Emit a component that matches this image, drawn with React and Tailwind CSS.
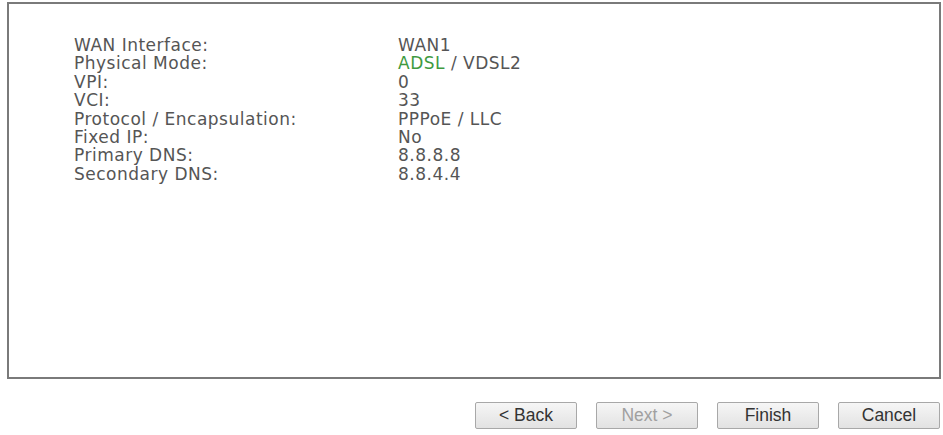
import React from "react";

const rows = [
  ["WAN Interface:", "WAN1"],
  ["Physical Mode:", "mode"],
  ["VPI:", "0"],
  ["VCI:", "33"],
  ["Protocol / Encapsulation:", "PPPoE / LLC"],
  ["Fixed IP:", "No"],
  ["Primary DNS:", "8.8.8.8"],
  ["Secondary DNS:", "8.8.4.4"],
];

function WizardButton({ children, disabled }) {
  return (
    <button
      type="button"
      className={
        "w-[102px] h-[27px] border border-[#a8a8a8] rounded-[2px] bg-gradient-to-b from-[#f6f6f6] to-[#e2e2e2] text-[17.5px] leading-none " +
        (disabled ? "text-[#a0a0a0]" : "text-[#333]")
      }
      style={{ fontFamily: '"Liberation Sans", Arial, sans-serif' }}
    >
      {children}
    </button>
  );
}

export default function App() {
  return (
    <div className="w-[943px] h-[435px] bg-white pl-[7px] pt-[2px]">
      <div
        className="w-[934px] h-[377px] border-2 border-[#7a7a7a] pl-[65px] pt-[32px] text-[17px] leading-[18.4px] tracking-[0.5px] text-[#555]"
        style={{ fontFamily: '"DejaVu Sans", Verdana, sans-serif' }}
      >
        {rows.map(([label, value]) => (
          <div key={label} className="flex">
            <div className="w-[324px]">{label}</div>
            <div>
              {value === "mode" ? (
                <>
                  <span className="text-[#3f9a3f]">ADSL</span> / VDSL2
                </>
              ) : (
                value
              )}
            </div>
          </div>
        ))}
      </div>
      <div className="flex justify-end gap-[19px] pr-[3px] pt-[23px]">
        <WizardButton>&lt; Back</WizardButton>
        <WizardButton disabled>Next &gt;</WizardButton>
        <WizardButton>Finish</WizardButton>
        <WizardButton>Cancel</WizardButton>
      </div>
    </div>
  );
}
